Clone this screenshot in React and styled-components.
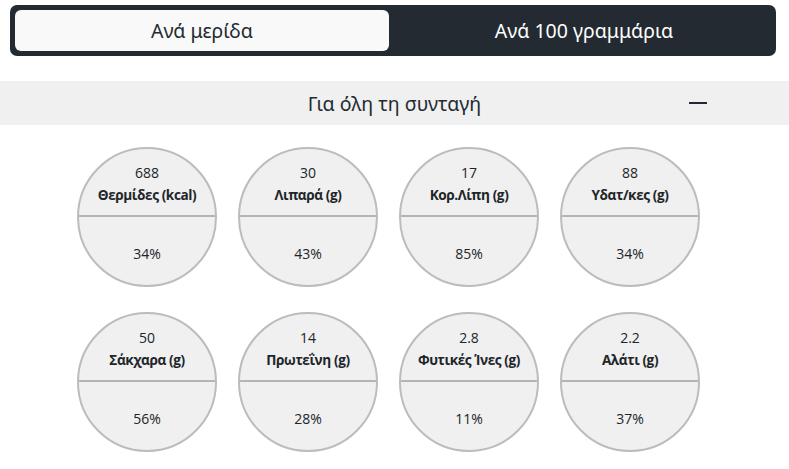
import React, { useState } from 'react';
import styled, { createGlobalStyle } from 'styled-components';

const GlobalStyle = createGlobalStyle`
  body {
    margin: 0;
    background: #fff;
    font-family: "Open Sans", "Noto Sans", sans-serif;
    color: #212529;
  }
`;

const Page = styled.div`
  width: 789px;
  padding-top: 5px;
`;

const Toggle = styled.div`
  margin: 0 13px 0 10px;
  display: flex;
  gap: 8px;
  padding: 5px;
  background: #232a31;
  border-radius: 7px;
`;

const ToggleButton = styled.button`
  flex: 1;
  height: 41px;
  border: none;
  border-radius: 6px;
  background: ${p => (p.active ? '#f9f9f9' : 'transparent')};
  color: ${p => (p.active ? '#232a31' : '#ffffff')};
  font-family: "Noto Sans", sans-serif;
  font-size: 19.5px;
  cursor: pointer;
  padding: 0;
`;

const SectionHeader = styled.div`
  margin-top: 25px;
  height: 44px;
  background: #f0f0f0;
  display: flex;
  align-items: center;
  justify-content: center;
  position: relative;
  font-family: "Noto Sans", sans-serif;
  font-size: 19.5px;
  color: #232a31;
`;

const Minus = styled.span`
  position: absolute;
  left: 689px;
  top: 21px;
  width: 18px;
  height: 2px;
  background: #232a31;
`;

const Grid = styled.div`
  display: grid;
  grid-template-columns: repeat(4, 140px);
  column-gap: 21px;
  row-gap: 25px;
  padding: 22px 0 0 77px;
`;

const Circle = styled.div`
  width: 140px;
  height: 140px;
  box-sizing: border-box;
  border: 2px solid #bcbcbc;
  border-radius: 50%;
  background: #f0f0f0;
  display: flex;
  flex-direction: column;
  overflow: hidden;
`;

const TopHalf = styled.div`
  height: 68px;
  display: flex;
  flex-direction: column;
  align-items: center;
  justify-content: center;
  padding-top: 5px;
  box-sizing: border-box;
  border-bottom: 2px solid #b4b4b4;
`;

const Amount = styled.div`
  font-size: 14px;
  line-height: 20px;
`;

const Label = styled.div`
  font-size: 13.6px;
  font-weight: 700;
  letter-spacing: -0.4px;
  line-height: 24px;
  white-space: nowrap;
`;

const BottomHalf = styled.div`
  flex: 1;
  display: flex;
  align-items: center;
  justify-content: center;
  font-size: 14px;
  padding-top: 4px;
`;

const items = [
  { amount: '688', label: 'Θερμίδες (kcal)', pct: '34%' },
  { amount: '30', label: 'Λιπαρά (g)', pct: '43%' },
  { amount: '17', label: 'Κορ.Λίπη (g)', pct: '85%' },
  { amount: '88', label: 'Υδατ/κες (g)', pct: '34%' },
  { amount: '50', label: 'Σάκχαρα (g)', pct: '56%' },
  { amount: '14', label: 'Πρωτεΐνη (g)', pct: '28%' },
  { amount: '2.8', label: 'Φυτικές Ίνες (g)', pct: '11%' },
  { amount: '2.2', label: 'Αλάτι (g)', pct: '37%' },
];

export default function App() {
  const [mode, setMode] = useState('portion');
  return (
    <Page>
      <GlobalStyle />
      <Toggle>
        <ToggleButton active={mode === 'portion'} onClick={() => setMode('portion')}>
          Ανά μερίδα
        </ToggleButton>
        <ToggleButton active={mode === '100g'} onClick={() => setMode('100g')}>
          Ανά 100 γραμμάρια
        </ToggleButton>
      </Toggle>
      <SectionHeader>
        Για όλη τη συνταγή
        <Minus />
      </SectionHeader>
      <Grid>
        {items.map(it => (
          <Circle key={it.label}>
            <TopHalf>
              <Amount>{it.amount}</Amount>
              <Label>{it.label}</Label>
            </TopHalf>
            <BottomHalf>{it.pct}</BottomHalf>
          </Circle>
        ))}
      </Grid>
    </Page>
  );
}
